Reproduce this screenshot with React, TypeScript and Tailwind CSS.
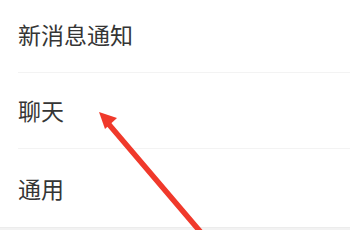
import React from "react";

export default function App() {
  const font = { fontFamily: '"Noto Sans CJK SC", "Noto Sans", sans-serif' };
  return (
    <div className="relative w-[350px] h-[230px] overflow-hidden bg-white" style={font}>
      <div className="flex flex-col">
        <div className="h-[72px] flex items-center pl-[18px] pb-[4px] text-[23px] text-[#353535]">新消息通知</div>
        <div className="ml-[18px] h-[1px] bg-[#f3f3f3]" />
        <div className="h-[75px] flex items-center pl-[18px] text-[23px] text-[#353535]">聊天</div>
        <div className="ml-[18px] h-[1px] bg-[#f3f3f3]" />
        <div className="h-[78px] flex items-center pl-[18px] text-[23px] text-[#353535]">通用</div>
        <div className="h-[10px] bg-[#f2f2f2] border-t border-[#ececec]" />
      </div>
      <svg className="absolute left-0 top-0" width="350" height="230" viewBox="0 0 350 230">
        <line x1="106" y1="121" x2="204" y2="236" stroke="#f0392b" strokeWidth="5.5" strokeLinecap="round" />
        <polygon points="99,112 117,118 105,129" fill="#f0392b" />
      </svg>
    </div>
  );
}
